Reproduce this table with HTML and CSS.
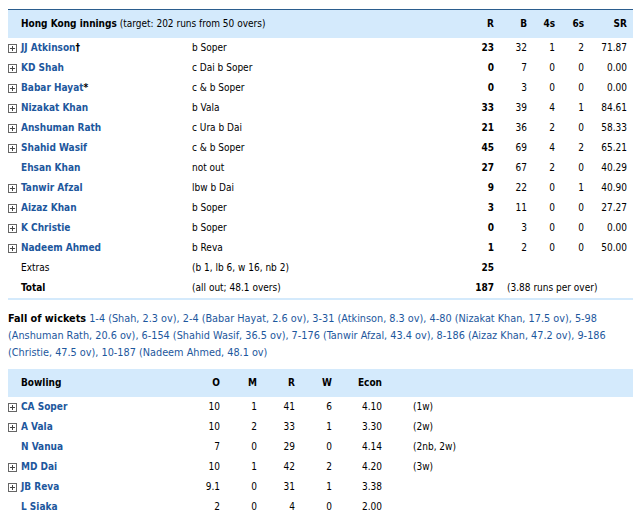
FILE: index.html
```html
<!DOCTYPE html>
<html>
<head>
<meta charset="utf-8">
<link rel="stylesheet" href="styles.css">
</head>
<body>
<div class="card">
  <div class="bat row head">
    <span class="title"><b>Hong Kong innings</b> (target: 202 runs from 50 overs)</span>
    <span class="num c-r">R</span><span class="num">B</span><span class="num">4s</span><span class="num">6s</span><span class="num">SR</span>
  </div>
  <div class="bat row"><i class="plus"></i><a class="name">JJ Atkinson<em>†</em></a><span>b Soper</span><b class="num">23</b><span class="num">32</span><span class="num">1</span><span class="num">2</span><span class="num">71.87</span></div>
  <div class="bat row"><i class="plus"></i><a class="name">KD Shah</a><span>c Dai b Soper</span><b class="num">0</b><span class="num">7</span><span class="num">0</span><span class="num">0</span><span class="num">0.00</span></div>
  <div class="bat row"><i class="plus"></i><a class="name">Babar Hayat<em>*</em></a><span>c &amp; b Soper</span><b class="num">0</b><span class="num">3</span><span class="num">0</span><span class="num">0</span><span class="num">0.00</span></div>
  <div class="bat row"><i class="plus"></i><a class="name">Nizakat Khan</a><span>b Vala</span><b class="num">33</b><span class="num">39</span><span class="num">4</span><span class="num">1</span><span class="num">84.61</span></div>
  <div class="bat row"><i class="plus"></i><a class="name">Anshuman Rath</a><span>c Ura b Dai</span><b class="num">21</b><span class="num">36</span><span class="num">2</span><span class="num">0</span><span class="num">58.33</span></div>
  <div class="bat row"><i class="plus"></i><a class="name">Shahid Wasif</a><span>c &amp; b Soper</span><b class="num">45</b><span class="num">69</span><span class="num">4</span><span class="num">2</span><span class="num">65.21</span></div>
  <div class="bat row"><i></i><a class="name">Ehsan Khan</a><span>not out</span><b class="num">27</b><span class="num">67</span><span class="num">2</span><span class="num">0</span><span class="num">40.29</span></div>
  <div class="bat row"><i class="plus"></i><a class="name">Tanwir Afzal</a><span>lbw b Dai</span><b class="num">9</b><span class="num">22</span><span class="num">0</span><span class="num">1</span><span class="num">40.90</span></div>
  <div class="bat row"><i class="plus"></i><a class="name">Aizaz Khan</a><span>b Soper</span><b class="num">3</b><span class="num">11</span><span class="num">0</span><span class="num">0</span><span class="num">27.27</span></div>
  <div class="bat row"><i class="plus"></i><a class="name">K Christie</a><span>b Soper</span><b class="num">0</b><span class="num">3</span><span class="num">0</span><span class="num">0</span><span class="num">0.00</span></div>
  <div class="bat row"><i class="plus"></i><a class="name">Nadeem Ahmed</a><span>b Reva</span><b class="num">1</b><span class="num">2</span><span class="num">0</span><span class="num">0</span><span class="num">50.00</span></div>
  <div class="bat row"><i></i><span class="plain">Extras</span><span>(b 1, lb 6, w 16, nb 2)</span><b class="num">25</b></div>
  <div class="bat row total"><i></i><b class="plain">Total</b><span>(all out; 48.1 overs)</span><b class="num">187</b><span class="rate">(3.88 runs per over)</span></div>

  <p class="fow"><b>Fall of wickets</b> 1-4 (Shah, 2.3 ov), 2-4 (Babar Hayat, 2.6 ov), 3-31 (Atkinson, 8.3 ov), 4-80 (Nizakat Khan, 17.5 ov), 5-98<br>(Anshuman Rath, 20.6 ov), 6-154 (Shahid Wasif, 36.5 ov), 7-176 (Tanwir Afzal, 43.4 ov), 8-186 (Aizaz Khan, 47.2 ov), 9-186<br>(Christie, 47.5 ov), 10-187 (Nadeem Ahmed, 48.1 ov)</p>

  <div class="bowl row head">
    <span class="title"><b>Bowling</b></span>
    <span class="num">O</span><span class="num">M</span><span class="num">R</span><span class="num">W</span><span class="num">Econ</span><span></span>
  </div>
  <div class="bowl row"><i class="plus"></i><a class="name">CA Soper</a><span class="num">10</span><span class="num">1</span><span class="num">41</span><span class="num">6</span><span class="num">4.10</span><span class="ex">(1w)</span></div>
  <div class="bowl row"><i class="plus"></i><a class="name">A Vala</a><span class="num">10</span><span class="num">2</span><span class="num">33</span><span class="num">1</span><span class="num">3.30</span><span class="ex">(2w)</span></div>
  <div class="bowl row"><i></i><a class="name">N Vanua</a><span class="num">7</span><span class="num">0</span><span class="num">29</span><span class="num">0</span><span class="num">4.14</span><span class="ex">(2nb, 2w)</span></div>
  <div class="bowl row"><i class="plus"></i><a class="name">MD Dai</a><span class="num">10</span><span class="num">1</span><span class="num">42</span><span class="num">2</span><span class="num">4.20</span><span class="ex">(3w)</span></div>
  <div class="bowl row"><i class="plus"></i><a class="name">JB Reva</a><span class="num">9.1</span><span class="num">0</span><span class="num">31</span><span class="num">1</span><span class="num">3.38</span><span class="ex"></span></div>
  <div class="bowl row"><i></i><a class="name">L Siaka</a><span class="num">2</span><span class="num">0</span><span class="num">4</span><span class="num">0</span><span class="num">2.00</span><span class="ex"></span></div>
</div>
</body>
</html>
```
FILE: styles.css
```css
html, body { margin: 0; padding: 0; background: #fff; }
body {
  padding: 9px 9px 0 8px;
  font-family: "DejaVu Sans Condensed", "DejaVu Sans", sans-serif;
  font-size: 10px;
  color: #000;
}
.card {
  width: 625px;
  border-top: 1px solid #2b5d8e;
}
.row {
  display: grid;
  align-items: center;
  height: 20px;
  line-height: 20px;
  white-space: nowrap;
}
.head {
  height: 28px;
  line-height: 28px;
  background: #d4eafc;
}
.head .num, .head .title b { font-weight: bold; }
.bat {
  grid-template-columns: 13px 171px 262px 40px 33px 28px 29px 43px 6px;
}
.bat.head .title { grid-column: 1 / 4; padding-left: 13px; }
.bowl {
  grid-template-columns: 13px 159px 40px 37px 38px 37px 50px 31px 1fr;
}
.bowl.head .title { grid-column: 1 / 3; padding-left: 13px; }
.num { text-align: right; }
b.num { font-weight: bold; }
.name {
  color: #1d579d;
  font-weight: bold;
  text-decoration: none;
}
.name em { color: #000; font-style: normal; }
.plain { color: #000; }
b.plain { font-weight: bold; }
.plus {
  display: block;
  width: 7px;
  height: 7px;
  border: 1px solid #666;
  position: relative;
}
.plus::before, .plus::after {
  content: "";
  position: absolute;
  background: #444;
}
.plus::before { left: 1px; top: 3px; width: 5px; height: 1px; }
.plus::after { left: 3px; top: 1px; width: 1px; height: 5px; }
.rate { grid-column: 5 / 10; padding-left: 13px; }
.total { border-bottom: 2px solid #d4eafc; box-sizing: content-box; }
.fow {
  margin: 0;
  padding: 10px 0 8px 0;
  font-size: 10.8px;
  line-height: 17px;
  color: #1d579d;
  white-space: nowrap;
}
.fow b { color: #000; }
.ex { grid-column: 9; }
```
